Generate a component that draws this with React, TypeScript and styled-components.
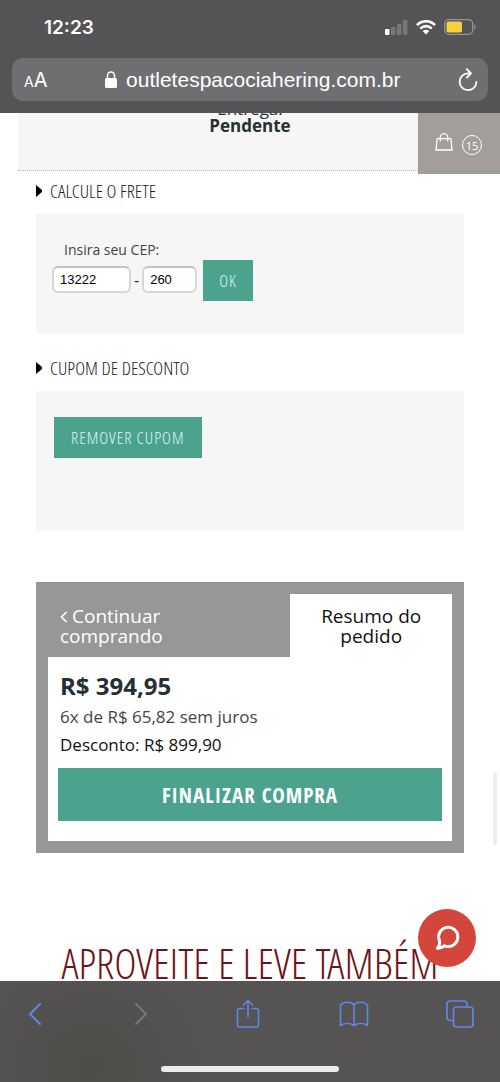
import React from 'react';
import styled, { createGlobalStyle } from 'styled-components';

const sans = '"Open Sans", "Noto Sans", sans-serif';
const condensed = '"Open Sans Condensed Light", "Open Sans Condensed", "Liberation Sans Narrow", sans-serif';
const condensedBold = '"Open Sans Condensed", "Liberation Sans Narrow", sans-serif';
const system = 'Inter, "Liberation Sans", sans-serif';
const green = '#4ba38e';
const blue = '#6089e0';

const GlobalStyle = createGlobalStyle`
  *, *::before, *::after { box-sizing: border-box; }
  body { margin: 0; background: #fff; font-family: ${sans}; color: #222; }
  button, input { font: inherit; margin: 0; }
  a { color: inherit; text-decoration: none; }
  h2, p { margin: 0; font-weight: 400; }
`;

const Shell = styled.div`
  display: flex;
  flex-direction: column;
  height: 100vh;
`;

const TopBar = styled.header`
  flex: none;
  padding: 14px 12px 12px;
  background: #545456;
  color: #fff;
  font-family: ${system};
`;

const StatusRow = styled.div`
  display: flex;
  align-items: center;
  justify-content: space-between;
  height: 26px;
  padding: 0 12px 0 32px;
  font-size: 19px;
  font-weight: 600;
`;

const StatusIcons = styled.div`
  display: flex;
  align-items: center;
  gap: 8px;
`;

const AddressBar = styled.div`
  display: flex;
  align-items: center;
  justify-content: space-between;
  height: 43px;
  margin-top: 18px;
  padding: 0 10px 0 12px;
  border-radius: 11px;
  background: #6f6f71;
`;

const BarButton = styled.button`
  display: flex;
  align-items: baseline;
  padding: 0;
  border: 0;
  background: none;
  color: inherit;
`;

const SmallA = styled.span`
  font-size: 14px;
`;

const LargeA = styled.span`
  font-size: 20px;
`;

const Address = styled.div`
  display: flex;
  align-items: center;
  gap: 9px;
  font-family: "Liberation Sans", Arial, sans-serif;
  font-size: 21px;
`;

const Page = styled.main`
  position: relative;
  flex: 1;
  min-height: 0;
  overflow: hidden;
`;

const Delivery = styled.section`
  margin: 0 18px;
  height: 58px;
  overflow: hidden;
  border-bottom: 1px dotted #bbb;
  background: #f6f6f6;
  text-align: center;
  font-size: 17px;
  line-height: 17px;
`;

const DeliveryText = styled.p`
  margin-top: -13px;
  color: #263033;
`;

const Cart = styled.a`
  position: absolute;
  top: 0;
  right: 0;
  display: flex;
  align-items: center;
  justify-content: center;
  gap: 9px;
  width: 82px;
  height: 61px;
  padding-right: 1px;
  background: #a39d9b;
  color: #fff;

  svg { margin-bottom: 3px; }
`;

const CartCount = styled.span`
  display: grid;
  place-items: center;
  width: 20px;
  height: 20px;
  margin-top: 3px;
  border: 1px solid #fff;
  border-radius: 50%;
  font-size: 11px;
  line-height: 11px;
`;

const Content = styled.div`
  padding: 0 36px;
`;

const SectionTitle = styled.h2`
  display: flex;
  align-items: center;
  gap: 8px;
  height: 43px;
  padding-bottom: 3px;
  color: #222;
  font-family: ${condensed};
  font-size: 19px;
  font-weight: 300;
  white-space: nowrap;
`;

const Panel = styled.section<{ $height: number }>`
  min-height: ${(p) => p.$height}px;
  margin-bottom: 14px;
  padding: 26px 16px;
  background: #f6f6f6;
`;

const CepForm = styled.form`
  display: flex;
  align-items: flex-start;
`;

const CepFields = styled.div`
  display: flex;
  flex-direction: column;
  gap: 6px;
`;

const CepLabel = styled.label`
  padding-left: 12px;
  color: #444;
  font-size: 14px;
  line-height: 20px;
`;

const FieldRow = styled.div`
  display: flex;
  align-items: center;
  gap: 3px;
  font-size: 16px;
  line-height: 16px;
`;

const Field = styled.input<{ $width: number }>`
  width: ${(p) => p.$width}px;
  height: 27px;
  padding: 0 6px;
  border: 2px solid #d6d6d6;
  border-top-color: #c2c2c2;
  border-radius: 6px;
  background: #fff;
  color: #000;
  font-family: "Liberation Sans", Arial, sans-serif;
  font-size: 13px;
`;

const GreenButton = styled.button`
  height: 41px;
  padding: 0 16px;
  border: 0;
  background: ${green};
  color: #dff5ee;
  font-family: ${condensed};
  font-size: 17px;
  font-weight: 300;
  letter-spacing: 1px;
  white-space: nowrap;
`;

const OkButton = styled(GreenButton)`
  margin: 20px 0 0 6px;
`;

const RemoveButton = styled(GreenButton)`
  margin-left: 2px;
  padding: 0 17px;
`;

const Summary = styled.section`
  margin-top: 51px;
  padding: 12px;
  background: #979797;
`;

const Tabs = styled.div`
  display: grid;
  grid-template-columns: 3fr 2fr;
  font-size: 19px;
  line-height: 20px;
`;

const BackLink = styled.a`
  padding: 12px 100px 11px 12px;
  color: #fff;

  svg { margin-right: 4px; }
`;

const ActiveTab = styled.h2`
  padding: 12px 24px 11px;
  background: #fff;
  color: #111;
  font-size: 19px;
  line-height: 20px;
  text-align: center;
`;

const SummaryBody = styled.div`
  padding: 13px 10px 20px;
  background: #fff;
`;

const Total = styled.p`
  padding: 0 0 1px 2px;
  color: #263033;
  font-size: 24px;
  font-weight: 700;
  line-height: 31px;
`;

const Detail = styled.p<{ $color: string }>`
  padding: 3px 0 1px 2px;
  color: ${(p) => p.$color};
  font-size: 17px;
  line-height: 24px;
`;

const Checkout = styled.button`
  display: block;
  width: 100%;
  height: 53px;
  margin-top: 10px;
  padding: 0;
  border: 0;
  background: ${green};
  color: #fff;
  font-family: ${condensedBold};
  font-size: 21px;
  font-weight: 700;
  letter-spacing: 1px;
`;

const AlsoTitle = styled.h2`
  margin-top: 80px;
  color: #701317;
  font-family: ${condensed};
  font-size: 43px;
  font-weight: 300;
  line-height: 60px;
  text-align: center;
  white-space: nowrap;
`;

const ScrollThumb = styled.div`
  position: absolute;
  top: 659px;
  right: 3px;
  width: 4px;
  height: 73px;
  border-radius: 2px;
  background: #eee;
`;

const ChatButton = styled.button`
  position: absolute;
  right: 24px;
  bottom: 14px;
  display: grid;
  place-items: center;
  width: 58px;
  height: 58px;
  padding: 0;
  border: 0;
  border-radius: 50%;
  background: #d4463c;
`;

const BottomBar = styled.footer`
  flex: none;
  padding: 13px 0 10px;
  background: radial-gradient(circle at 18% 85%, #4f4d48 0, #555354 110px);
`;

const Nav = styled.nav`
  display: flex;
  justify-content: space-between;
  padding: 0 19px 0 14px;
`;

const NavButton = styled.button`
  display: grid;
  place-items: center;
  width: 42px;
  height: 40px;
  padding: 0;
  border: 0;
  background: none;
  color: ${blue};

  &:disabled { color: #77777a; }
`;

const HomeIndicator = styled.div`
  width: 178px;
  height: 6px;
  margin: 32px auto 0;
  border-radius: 3px;
  background: #edebea;
`;

const Arrow = () => (
  <svg width="6" height="12" viewBox="0 0 6 12" aria-hidden="true">
    <path d="M0 0L6 5v2L0 12z" fill="#000" />
  </svg>
);

export default function App() {
  return (
    <Shell>
      <GlobalStyle />
      <TopBar>
        <StatusRow>
          <span>12:23</span>
          <StatusIcons>
            <svg width="23" height="15" viewBox="0 0 23 15" fill="#77777a">
              <rect x="0" y="9" width="4.500" height="6" rx="1" fill="#fff" />
              <rect x="6" y="7" width="4.500" height="8" rx="1" />
              <rect x="12" y="4" width="4.500" height="11" rx="1" />
              <rect x="18" y="0" width="4.500" height="15" rx="1" />
            </svg>
            <svg width="20" height="15" viewBox="0 0 20 15" fill="none" stroke="#fff" strokeWidth="2.6">
              <path d="M1 5.2C6-.1 14-.1 19 5.2M4.3 8.6c3.2-3.3 8.2-3.3 11.4 0" />
              <path d="M6.8 11.2c1.8-1.9 4.6-1.9 6.4 0L10 14.6z" fill="#fff" stroke="none" />
            </svg>
            <svg width="32" height="16" viewBox="0 0 32 16">
              <rect x=".7" y=".7" width="28" height="14.6" rx="4" fill="none" stroke="#969690" strokeWidth="1.3" />
              <rect x="2.5" y="2.5" width="15.5" height="11" rx="2" fill="#f5d03f" />
              <path d="M30.2 5.3q2.6 2.7 0 5.4z" fill="#969690" />
            </svg>
          </StatusIcons>
        </StatusRow>
        <AddressBar>
          <BarButton aria-label="Opções de texto">
            <SmallA>A</SmallA>
            <LargeA>A</LargeA>
          </BarButton>
          <Address>
            <svg width="12" height="17" viewBox="0 0 12 17">
              <rect x="0" y="7" width="12" height="10" rx="1.5" fill="#fff" />
              <path d="M2.5 8V4.5a3.5 3.5 0 0 1 7 0V8" fill="none" stroke="#fff" strokeWidth="1.6" />
            </svg>
            <span>outletespacociahering.com.br</span>
          </Address>
          <BarButton aria-label="Recarregar">
            <svg width="20" height="24" viewBox="0 0 20 24" fill="none" stroke="#fff" strokeWidth="1.8" strokeLinecap="round" strokeLinejoin="round">
              <path d="M12 5.4h-2A8.4 8.4 0 1 0 18.4 14M8.8 1.2L13 5.4 8.8 9.6" />
            </svg>
          </BarButton>
        </AddressBar>
      </TopBar>

      <Page>
        <Delivery>
          <DeliveryText>
            Entrega:
            <br />
            <strong>Pendente</strong>
          </DeliveryText>
        </Delivery>
        <Cart href="#carrinho" aria-label="Carrinho, 15 itens">
          <svg width="18" height="18" viewBox="0 0 18 18" fill="none" stroke="#fff" strokeWidth="1.3">
            <path d="M2.2 5.6h13.6L17 17H1zM5.3 8.5V4.3a3.7 3.7 0 0 1 7.4 0v4.2" />
          </svg>
          <CartCount>15</CartCount>
        </Cart>

        <Content>
          <SectionTitle>
            <Arrow />
            CALCULE O FRETE
          </SectionTitle>
          <Panel $height={120}>
            <CepForm onSubmit={(e) => e.preventDefault()}>
              <CepFields>
                <CepLabel htmlFor="cep">Insira seu CEP:</CepLabel>
                <FieldRow>
                  <Field id="cep" $width={79} defaultValue="13222" />
                  <span>-</span>
                  <Field $width={55} aria-label="Complemento do CEP" defaultValue="260" />
                </FieldRow>
              </CepFields>
              <OkButton type="submit">OK</OkButton>
            </CepForm>
          </Panel>

          <SectionTitle>
            <Arrow />
            CUPOM DE DESCONTO
          </SectionTitle>
          <Panel $height={140}>
            <RemoveButton type="button">REMOVER CUPOM</RemoveButton>
          </Panel>

          <Summary>
            <Tabs>
              <BackLink href="#loja">
                <svg width="8" height="12" viewBox="0 0 8 12" fill="none" stroke="#fff" strokeWidth="1.7" aria-hidden="true">
                  <path d="M6.500 1L1.500 6l5 5" />
                </svg>
                Continuar comprando
              </BackLink>
              <ActiveTab>Resumo do pedido</ActiveTab>
            </Tabs>
            <SummaryBody>
              <Total>R$ 394,95</Total>
              <Detail $color="#444">6x de R$ 65,82 sem juros</Detail>
              <Detail $color="#111">Desconto: R$ 899,90</Detail>
              <Checkout type="button">FINALIZAR COMPRA</Checkout>
            </SummaryBody>
          </Summary>

          <AlsoTitle>APROVEITE E LEVE TAMBÉM</AlsoTitle>
        </Content>

        <ScrollThumb />
        <ChatButton aria-label="Abrir chat">
          <svg width="25" height="26" viewBox="0 0 25 26" fill="none" stroke="#fff" strokeWidth="3" strokeLinejoin="round">
            <path d="M4.600 16.200A9.600 9.600 0 1 1 9.500 20.800Q6 23.500 2.500 23.300 5 20.500 4.600 16.200z" />
          </svg>
        </ChatButton>
      </Page>

      <BottomBar>
        <Nav>
          <NavButton aria-label="Voltar">
            <svg width="14" height="22" viewBox="0 0 14 22" fill="none" stroke="currentColor" strokeWidth="2" strokeLinecap="round">
              <path d="M12 1L2 11l10 10" />
            </svg>
          </NavButton>
          <NavButton aria-label="Avançar" disabled>
            <svg width="14" height="22" viewBox="0 0 14 22" fill="none" stroke="currentColor" strokeWidth="2" strokeLinecap="round">
              <path d="M2 1l10 10L2 21" />
            </svg>
          </NavButton>
          <NavButton aria-label="Compartilhar">
            <svg width="24" height="30" viewBox="0 0 24 30" fill="none" stroke="currentColor" strokeWidth="1.6" strokeLinecap="round" strokeLinejoin="round">
              <path d="M8 9.500H3.500a2 2 0 0 0-2 2V26a2 2 0 0 0 2 2h17a2 2 0 0 0 2-2V11.500a2 2 0 0 0-2-2H16M12 18V1.500M7.500 6L12 1.500 16.500 6" />
            </svg>
          </NavButton>
          <NavButton aria-label="Favoritos">
            <svg width="30" height="26" viewBox="0 0 30 26" fill="none" stroke="currentColor" strokeWidth="1.6" strokeLinejoin="round">
              <path d="M15 4C12 .3 4.500.3 1.500 4v20.500c4-2.600 9.500-2.600 13.500 0 4-2.600 9.500-2.600 13.500 0V4C25.500.3 18 .3 15 4zv20.500" />
            </svg>
          </NavButton>
          <NavButton aria-label="Abas">
            <svg width="28" height="28" viewBox="0 0 28 28" fill="none" stroke="currentColor" strokeWidth="1.7">
              <path d="M7.500 20.500H4a3 3 0 0 1-3-3V4a3 3 0 0 1 3-3h14a3 3 0 0 1 3 3v3" />
              <rect x="7.500" y="7" width="19.500" height="20" rx="3" />
            </svg>
          </NavButton>
        </Nav>
        <HomeIndicator />
      </BottomBar>
    </Shell>
  );
}
